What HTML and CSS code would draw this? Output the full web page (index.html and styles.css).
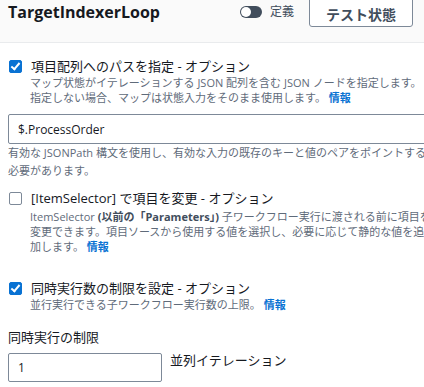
FILE: index.html
```html
<!DOCTYPE html>
<html lang="ja">
	<head>
		<meta charset="utf-8">
		<meta name="viewport" content="width=device-width">
		<title>TargetIndexerLoop</title>
		<link rel="stylesheet" href="styles.css">
	</head>

	<body>
		<header class="state-header">
			<h1 class="state-title">TargetIndexerLoop</h1>
			<label class="toggle">
				<span class="toggle-track"><span class="toggle-knob"></span></span>
				<span class="toggle-text">定義</span>
			</label>
			<button class="btn" type="button">テスト状態</button>
		</header>

		<main class="panel">
			<section class="option">
				<label class="check-row">
					<span class="check is-checked"></span>
					<span class="check-label">項目配列へのパスを指定 - オプション</span>
				</label>
				<p class="option-desc">マップ状態がイテレーションする JSON 配列を含む JSON ノードを指定します。<br>指定しない場合、マップは状態入力をそのまま使用します。 <a class="info" href="#">情報</a></p>
			</section>

			<input class="text-input wide" type="text" value="$.ProcessOrder">
			<p class="help">有効な JSONPath 構文を使用し、有効な入力の既存のキーと値のペアをポイントする<br>必要があります。</p>

			<section class="option near">
				<label class="check-row">
					<span class="check"></span>
					<span class="check-label">[ItemSelector] で項目を変更 - オプション</span>
				</label>
				<p class="option-desc">ItemSelector <b>(以前の「Parameters」)</b> 子ワークフロー実行に渡される前に項目を<br>変更できます。項目ソースから使用する値を選択し、必要に応じて静的な値を追<br>加します。 <a class="info" href="#">情報</a></p>
			</section>

			<section class="option spaced">
				<label class="check-row">
					<span class="check is-checked"></span>
					<span class="check-label">同時実行数の制限を設定 - オプション</span>
				</label>
				<p class="option-desc">並行実行できる子ワークフロー実行数の上限。 <a class="info" href="#">情報</a></p>
			</section>

			<div class="field">
				<label class="field-label" for="max-concurrency">同時実行の制限</label>
				<div class="field-row">
					<input class="text-input short" id="max-concurrency" type="text" value="1">
					<span class="field-suffix">並列イテレーション</span>
				</div>
			</div>
		</main>
	</body>

</html>
```

FILE: styles.css
```css
html, body {
	margin: 0;
	overflow: hidden;
}
body {
	font-family: "Open Sans", "Noto Sans CJK JP", sans-serif;
	color: #16191f;
	background: #fff;
	width: 424px;
}
.state-header {
	display: flex;
	align-items: flex-start;
	height: 42px;
	padding: 0 11px 0 8px;
	background: #fafafa;
	border-bottom: 1px solid #e9ebed;
}
.state-title {
	margin: 0;
	font-size: 16px;
	font-weight: 700;
	line-height: 24px;
	flex: 1;
}
.toggle {
	display: flex;
	align-items: center;
	gap: 8px;
	height: 24px;
	margin-right: 15px;
}
.toggle-track {
	display: flex;
	align-items: center;
	width: 22px;
	height: 12px;
	border-radius: 6px;
	background: #414d5c;
	padding: 0 1px;
	box-sizing: border-box;
}
.toggle-knob {
	width: 10px;
	height: 10px;
	border-radius: 50%;
	background: #fff;
}
.toggle-text {
	font-size: 12px;
	line-height: 18px;
	color: #414d5c;
}
.btn {
	margin-top: -6px;
	width: 104px;
	height: 33px;
	padding: 6px 0 0;
	border: 1px solid #7d8998;
	border-radius: 3px;
	background: #fff;
	color: #414d5c;
	font: inherit;
	font-size: 14px;
	font-weight: 700;
}

.panel {
	display: flex;
	flex-direction: column;
	width: 600px;
	padding: 0 0 0 8px;
	box-sizing: border-box;
	white-space: nowrap;
}
.option {
	margin-top: 14px;
}
.option.near {
	margin-top: 9px;
}
.option.spaced {
	margin-top: 25px;
}
.check-row {
	display: flex;
	align-items: center;
	gap: 9px;
}
.check {
	position: relative;
	width: 13px;
	height: 13px;
	box-sizing: border-box;
	border: 1.5px solid #7d8998;
	border-radius: 2px;
	margin-left: 1px;
	background: #fff;
}
.check.is-checked {
	border-color: #0972d3;
	background: #0972d3;
}
.check.is-checked::after {
	content: "";
	position: absolute;
	left: 3px;
	top: 0;
	width: 3px;
	height: 7px;
	border: solid #fff;
	border-width: 0 2px 2px 0;
	transform: rotate(40deg);
}
.check-label {
	font-size: 13px;
	line-height: 18px;
}
.option-desc {
	margin: 0 0 0 22px;
	font-size: 11px;
	line-height: 15px;
	color: #5f6b7a;
}
.option.near .option-desc {
	margin-top: 2px;
}
.option-desc b {
	color: #414d5c;
}
.info {
	color: #0972d3;
	font-weight: 700;
	text-decoration: none;
}
.text-input {
	box-sizing: border-box;
	height: 30px;
	padding: 0 9px;
	border: 1px solid #7d8998;
	border-radius: 2px;
	font: inherit;
	font-size: 12px;
	color: #16191f;
	background: #fff;
}
.wide {
	margin-top: 9px;
	width: 100%;
}
.short {
	width: 154px;
	height: 29px;
}
.help {
	margin: 0;
	font-size: 11px;
	line-height: 18px;
	color: #5f6b7a;
}
.field {
	margin-top: 16px;
}
.field-label {
	display: block;
	font-size: 13px;
	line-height: 18px;
}
.field-row {
	display: flex;
	align-items: flex-start;
	gap: 8px;
	margin-top: 7px;
}
.field-suffix {
	font-size: 13px;
	line-height: 18px;
	margin-top: -2px;
}
```
